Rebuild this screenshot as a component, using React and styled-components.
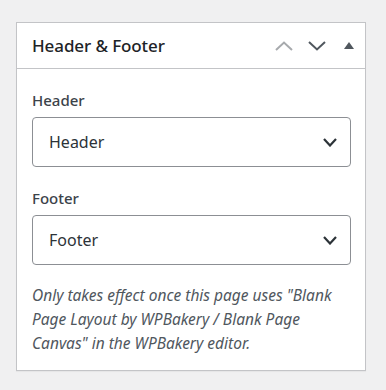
import React from 'react'
import styled, { createGlobalStyle } from 'styled-components'

const Global = createGlobalStyle`
    body {
        margin: 0;
        background: #f0f0f1;
        font-family: "Noto Sans", "Open Sans", sans-serif;
        color: #1d2327;
    }
`

const Page = styled.div`
    padding: 22px 20px 19px 16px;
`

const Card = styled.div`
    background: #fff;
    border: 1px solid #c3c4c7;
    box-shadow: 0 1px 1px rgba(0, 0, 0, 0.04);
`

const CardHeader = styled.div`
    display: flex;
    align-items: center;
    height: 45px;
    padding: 0 0 0 15px;
    border-bottom: 1px solid #c3c4c7;
`

const Title = styled.h2`
    flex: 1;
    margin: 0;
    font-size: 17px;
    font-weight: 500;
    letter-spacing: -0.1px;
`

const Handle = styled.button`
    display: flex;
    align-items: center;
    justify-content: center;
    width: ${p => p.$w || 33}px;
    height: 36px;
    padding: 0;
    border: 0;
    background: none;
    color: ${p => p.$muted ? '#a7aaad' : '#50575e'};
`

const Body = styled.div`
    padding: 21px 14px 15px 15px;
`

const Label = styled.div`
    font-size: 15px;
    font-weight: 500;
    color: #3c434a;
    line-height: 20px;
    margin-bottom: 7px;
`

const SelectBox = styled.div`
    display: flex;
    align-items: center;
    justify-content: space-between;
    height: 48px;
    padding: 0 13px 0 16px;
    border: 1px solid #8c8f94;
    border-radius: 4px;
    font-size: 16px;
    color: #2c3338;
    margin-bottom: ${p => p.$gap || 0}px;
`

const Help = styled.p`
    margin: 18px 0 0;
    font-style: italic;
    font-size: 15.5px;
    line-height: 24px;
    color: #50575e;
`

const Chevron = ({ up, w = 18, h = 10, stroke = 2 }) => (
    <svg width={w} height={h} viewBox={`0 0 ${w} ${h}`} fill="none">
        <path d={up ? `M1 ${h - 1} L${w / 2} 1.5 L${w - 1} ${h - 1}` : `M1 1 L${w / 2} ${h - 1.5} L${w - 1} 1`}
            stroke="currentColor" strokeWidth={stroke} />
    </svg>
)

const Select = ({ value, gap }) => (
    <SelectBox $gap={gap}>
        <span>{value}</span>
        <Chevron w={14} h={9} stroke={2.2} />
    </SelectBox>
)

const App = () => (
    <Page>
        <Global />
        <Card>
            <CardHeader>
                <Title>Header &amp; Footer</Title>
                <Handle $muted><Chevron up /></Handle>
                <Handle><Chevron /></Handle>
                <Handle $w={32}>
                    <svg width="10" height="7" viewBox="0 0 10 7"><path d="M5 0 L10 7 L0 7 Z" fill="currentColor" /></svg>
                </Handle>
            </CardHeader>
            <Body>
                <Label>Header</Label>
                <Select value="Header" gap={21} />
                <Label>Footer</Label>
                <Select value="Footer" />
                <Help>Only takes effect once this page uses "Blank Page Layout by WPBakery / Blank Page Canvas" in the WPBakery editor.</Help>
            </Body>
        </Card>
    </Page>
)

export default App
